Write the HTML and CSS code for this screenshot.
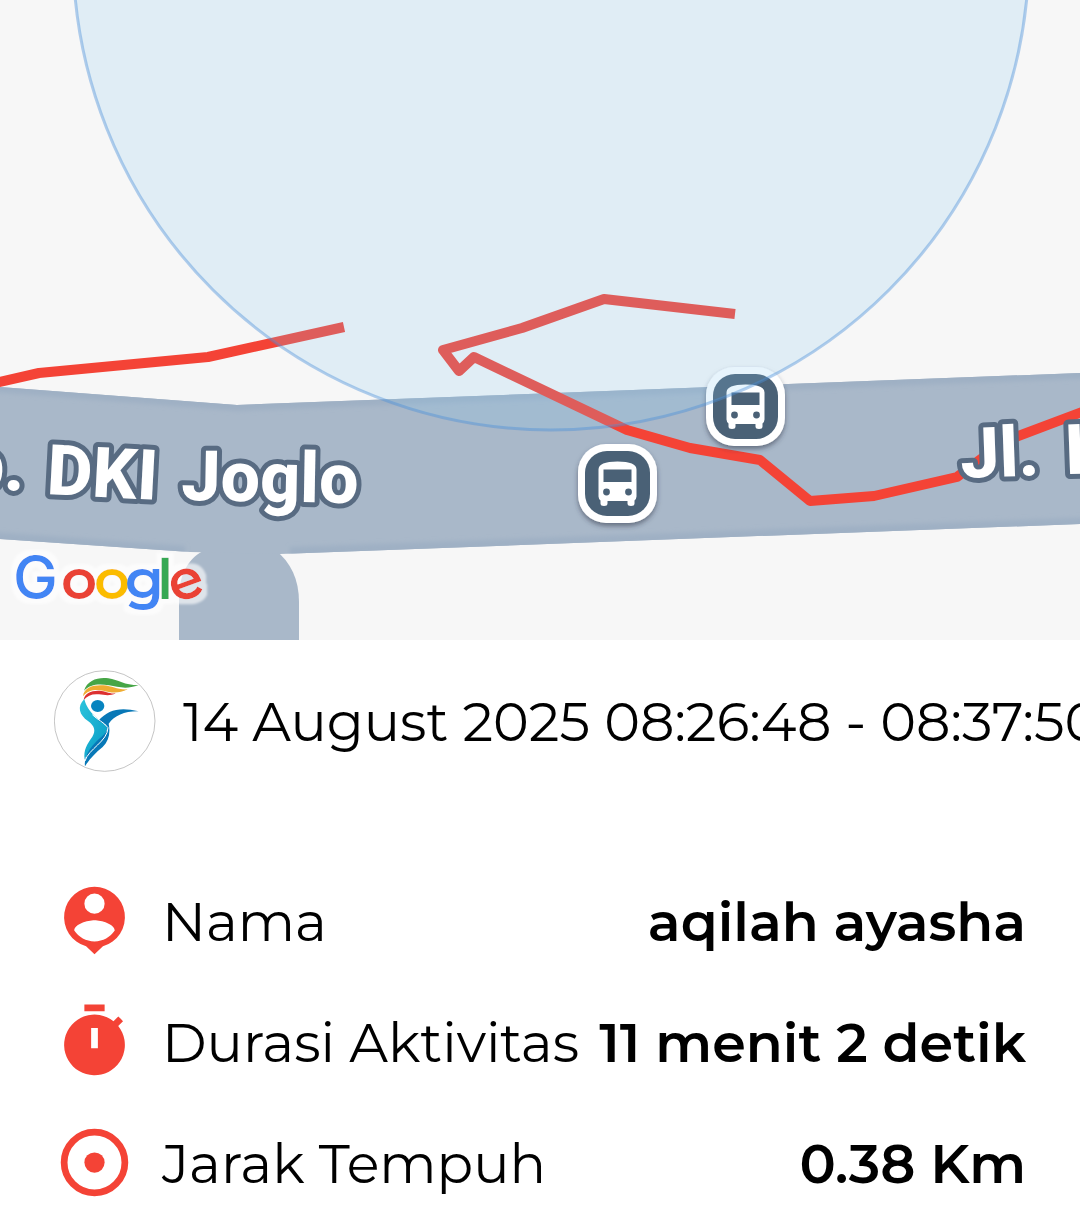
FILE: index.html
```html
<!DOCTYPE html>
<html lang="id">
<head>
<meta charset="utf-8">
<meta name="viewport" content="width=device-width, initial-scale=1">
<title>Detail Aktivitas</title>
<link rel="stylesheet" href="styles.css">
</head>
<body>
<main class="page">
  <svg class="map" viewBox="0 0 1080 640" role="img" aria-label="Peta rute">
    <defs>
      <filter id="shadow" x="-20%" y="-20%" width="140%" height="140%">
        <feDropShadow dx="0" dy="3" stdDeviation="2.5" flood-color="#303848" flood-opacity=".55"/>
      </filter>
      <filter id="soft"><feGaussianBlur stdDeviation="2"/></filter>
      <filter id="halo" x="-10%" y="-20%" width="120%" height="140%">
        <feMorphology in="SourceAlpha" operator="dilate" radius="5" result="wide"/>
        <feGaussianBlur in="wide" stdDeviation="1" result="edge"/>
        <feFlood flood-color="#fff" flood-opacity=".62"/>
        <feComposite in2="edge" operator="in" result="glow"/>
        <feMerge><feMergeNode in="glow"/><feMergeNode in="SourceGraphic"/></feMerge>
      </filter>
      <g id="bus">
        <rect x="-39.5" y="-39.5" width="79" height="79" rx="28" fill="#fff" filter="url(#shadow)"/>
        <rect x="-32.5" y="-32.5" width="65" height="65" rx="22" fill="#4a6176"/>
        <path fill="#fff" d="M-19 -14Q-19 -22 0 -22T19 -14V13Q19 15 17 17V20Q17 22.500 13.500 22.500T10 20V17.500H-10V20Q-10 22.500 -13.500 22.500T-17 20V17Q-19 15 -19 13Z"/>
        <rect x="-14" y="-14" width="28" height="12.500" fill="#4a6176"/>
        <circle cx="-11" cy="8.500" r="3.400" fill="#4a6176"/>
        <circle cx="11" cy="8.500" r="3.400" fill="#4a6176"/>
      </g>
      <clipPath id="road-clip"><path d="M0 387L237 405L1080 373V524L280 554L190 552L0 539Z"/></clipPath>
    </defs>
    <rect width="1080" height="640" fill="#f7f7f7"/>
    <path class="road" d="M179 640V598C179 572 190 557 205 550H275C291 562 299 580 299 602V640Z"/>
    <path class="road" d="M0 387L237 405L1080 373V524L280 554L190 552L0 539Z"/>
    <g clip-path="url(#road-clip)">
      <path class="road-edge" filter="url(#soft)" d="M-20 385L237 405L1100 372M-20 537L185 552M290 553L1100 523"/>
    </g>
    <g class="route">
      <path d="M-5 383L39 373L208 357L344 327"/>
      <path d="M735 314L604 299L522 328L443 350L459 371L474 357L627 430L690 448L760 460L810 501L874 496L957 477L1005 441L1090 409"/>
    </g>
    <use href="#bus" x="617.5" y="483.500"/>
    <use href="#bus" x="745.5" y="406.500"/>
    <circle class="accuracy" cx="551" cy="-48" r="478"/>
    <g class="street">
      <text x="-36" y="488" transform="rotate(3 -36 488)">p.</text>
      <text x="46" y="494" transform="rotate(3 46 494)">DKI</text>
      <text x="181" y="500" transform="rotate(1 181 500)">Joglo</text>
      <text x="961" y="478" transform="rotate(-2 961 478)">Jl. <tspan x="1066">K</tspan></text>
    </g>
    <text class="brand" y="599" filter="url(#halo)"><tspan class="brand-cap" x="13" fill="#4285f4">G</tspan><tspan x="61" fill="#ea4335">o</tspan><tspan x="94" fill="#fbbc05">o</tspan><tspan x="125" fill="#4285f4">g</tspan><tspan x="157" fill="#34a853">l</tspan><tspan x="175" y="604" rotate="-20" fill="#ea4335">e</tspan></text>
  </svg>

  <section class="panel">
    <header class="head">
      <svg class="avatar" viewBox="42 30 306 306" aria-hidden="true">
        <defs>
          <linearGradient id="body" x1="0" y1="0" x2="1" y2="1">
            <stop offset="0" stop-color="#2bc4dc"/><stop offset="1" stop-color="#0799c4"/>
          </linearGradient>
        </defs>
        <circle cx="194" cy="183" r="151" fill="#fff" stroke="#a8a8a8" stroke-width="2"/>
        <path fill="#46a546" d="M132 92C142 60 175 51 205 55C236 59 252 76 296 76C260 88 236 82 207 76C176 70 149 73 132 92Z"/>
        <path fill="#efac32" d="M129 109C132 82 160 74 190 76C218 78 232 90 263 88C235 102 212 98 190 92C163 87 144 91 129 109Z"/>
        <path fill="#dc3030" d="M131 120C134 99 154 91 178 92C198 93 207 102 227 100C210 109 193 105 177 103C157 101 143 106 131 120Z"/>
        <ellipse cx="173" cy="138" rx="20" ry="18" fill="#0784bf"/>
        <path fill="url(#body)" d="M133 117C110 140 118 165 144 183C164 198 168 212 157 230C141 254 130 268 134 299C147 265 197 239 203 202C184 181 143 162 133 117Z"/>
        <path fill="#0878b7" d="M175 182C205 149 240 140 296 154C255 153 224 166 206 191C212 220 206 243 188 261C165 280 150 295 135 319C130 285 158 253 183 232C203 215 207 203 194 192Z"/>
        <path fill="none" stroke="#fff" stroke-width="3" d="M135 303C145 267 203 244 204 203C192 186 171 179 157 164"/>
      </svg>
      <p class="date">14 August 2025 08:26:48 - 08:37:50</p>
    </header>

    <dl class="stats">
      <div class="row">
        <dt class="label">
          <svg class="icon" viewBox="0 0 24 24" aria-hidden="true"><path fill-rule="evenodd" d="M12 2a9 9 0 0 0-2.500 17.650L12 22l2.500-2.350A9 9 0 0 0 12 2ZM12 4a3 3 0 1 1 0 6a3 3 0 0 1 0-6ZM12 18.200c-2.500 0-4.710-1.280-6-3.220c.03-1.990 4-3.080 6-3.080c1.990 0 5.970 1.090 6 3.080c-1.290 1.940-3.500 3.220-6 3.220Z"/></svg>
          <span>Nama</span>
        </dt>
        <dd class="value">aqilah ayasha</dd>
      </div>
      <div class="row">
        <dt class="label">
          <svg class="icon" viewBox="0 0 24 24" aria-hidden="true"><path fill-rule="evenodd" d="M9 1h6v2H9ZM19.030 7.390l1.420-1.420c-.43-.51-.9-.99-1.410-1.410l-1.420 1.420A9 9 0 1 0 19.030 7.390ZM11 8h2v6h-2Z"/></svg>
          <span>Durasi Aktivitas</span>
        </dt>
        <dd class="value">11 menit 2 detik</dd>
      </div>
      <div class="row">
        <dt class="label">
          <svg class="icon" viewBox="0 0 24 24" aria-hidden="true"><circle cx="12" cy="12" r="9" fill="none" stroke="#f44336" stroke-width="2"/><circle cx="12" cy="12" r="3"/></svg>
          <span>Jarak Tempuh</span>
        </dt>
        <dd class="value">0.38 Km</dd>
      </div>
    </dl>
  </section>
</main>
</body>
</html>
```
FILE: styles.css
```css
* { box-sizing: border-box; }

body {
  margin: 0;
  background: #fff;
  color: #000;
  font-family: Montserrat, Inter, "Liberation Sans", sans-serif;
  font-size: 54px;
  line-height: 64px;
}

.page { overflow: hidden; }

.map {
  display: block;
  width: 100%;
  height: auto;
}

.road { fill: #a9b8c9; }

.road-edge {
  fill: none;
  stroke: #9fb0c4;
  stroke-width: 12;
}

.route {
  fill: none;
  stroke: #f44336;
  stroke-width: 10;
  stroke-linejoin: round;
}

.accuracy {
  fill: rgba(137, 202, 242, .2);
  stroke: rgba(74, 144, 217, .42);
  stroke-width: 3;
}

.street {
  fill: #fff;
  stroke: #586b82;
  stroke-width: 10;
  stroke-linejoin: round;
  paint-order: stroke;
  font-family: Roboto, sans-serif;
  font-size: 70px;
  font-weight: 800;
}

.brand {
  font-family: Montserrat, Lato, sans-serif;
  font-size: 56px;
  font-weight: 600;
}

.brand-cap {
  font-family: Inter, sans-serif;
  font-size: 60px;
  font-weight: 500;
}

.panel { padding: 30px 54px 14px; }

.head {
  display: flex;
  align-items: center;
  gap: 27px;
}

.avatar {
  flex: none;
  width: 102px;
  height: 102px;
}

.date {
  margin: 0;
  padding-top: 2px;
  white-space: nowrap;
}

.stats {
  display: flex;
  flex-direction: column;
  gap: 40px;
  margin: 108px 0 0;
}

.row {
  display: flex;
  align-items: center;
  justify-content: space-between;
}

.label {
  display: flex;
  align-items: center;
  gap: 27px;
  white-space: nowrap;
}

.label span,
.value { padding-top: 2px; }

.icon {
  flex: none;
  width: 81px;
  height: 81px;
  fill: #f44336;
}

.value {
  margin: 0;
  font-weight: 600;
  white-space: nowrap;
}
```
